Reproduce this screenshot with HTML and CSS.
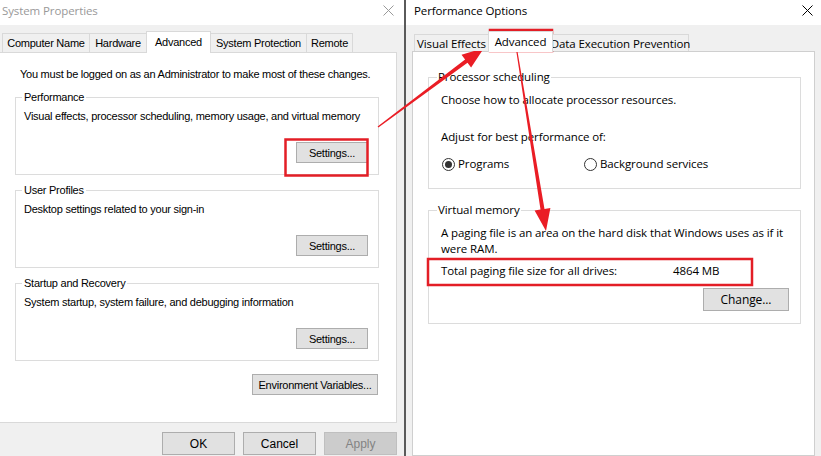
FILE: index.html
```html
<!DOCTYPE html>
<html lang="en">
<head>
<meta charset="utf-8">
<title>System Properties / Performance Options</title>
<link rel="stylesheet" href="styles.css">
</head>
<body>
<div class="desktop">
  <section class="win win-sys">
    <header class="titlebar">
      <span class="title title-inactive">System Properties</span>
      <svg class="close close-inactive" width="11" height="11" viewBox="0 0 11 11"><path d="M0.5 0.5L10.5 10.5M10.5 0.5L0.5 10.5"/></svg>
    </header>
    <nav class="tabs tabs-sys">
      <span class="tab w-cn">Computer Name</span>
      <span class="tab w-hw">Hardware</span>
      <span class="tab tab-active w-adv">Advanced</span>
      <span class="tab w-sp">System Protection</span>
      <span class="tab w-rm">Remote</span>
    </nav>
    <div class="panel panel-sys">
      <p class="note">You must be logged on as an Administrator to make most of these changes.</p>
      <fieldset class="group">
        <legend>Performance</legend>
        <p class="desc">Visual effects, processor scheduling, memory usage, and virtual memory</p>
        <div class="btnrow"><button class="btn btn-set">Settings...</button></div>
      </fieldset>
      <fieldset class="group">
        <legend>User Profiles</legend>
        <p class="desc">Desktop settings related to your sign-in</p>
        <div class="btnrow"><button class="btn btn-set">Settings...</button></div>
      </fieldset>
      <fieldset class="group">
        <legend>Startup and Recovery</legend>
        <p class="desc">System startup, system failure, and debugging information</p>
        <div class="btnrow"><button class="btn btn-set">Settings...</button></div>
      </fieldset>
      <div class="envrow"><button class="btn btn-env">Environment Variables...</button></div>
    </div>
    <footer class="footer">
      <button class="btn btn-dlg">OK</button>
      <button class="btn btn-dlg">Cancel</button>
      <button class="btn btn-dlg btn-disabled">Apply</button>
    </footer>
  </section>

  <section class="win win-perf">
    <header class="titlebar">
      <span class="title">Performance Options</span>
      <svg class="close" width="11" height="11" viewBox="0 0 11 11"><path d="M0.5 0.5L10.5 10.5M10.5 0.5L0.5 10.5"/></svg>
    </header>
    <nav class="tabs tabs-perf">
      <span class="tab w-ve">Visual Effects</span>
      <span class="tab tab-active w-adv2">Advanced</span>
      <span class="tab w-dep">Data Execution Prevention</span>
    </nav>
    <div class="panel panel-perf">
      <fieldset class="group group-perf">
        <legend>Processor scheduling</legend>
        <p class="line first">Choose how to allocate processor resources.</p>
        <p class="line adjust">Adjust for best performance of:</p>
        <div class="radios">
          <span class="radio"><span class="dot dot-on"></span>Programs</span>
          <span class="radio"><span class="dot"></span>Background services</span>
        </div>
      </fieldset>
      <fieldset class="group group-perf group-vm">
        <legend>Virtual memory</legend>
        <p class="line first nowrap">A paging file is an area on the hard disk that Windows uses as if it<br>were RAM.</p>
        <div class="total"><span>Total paging file size for all drives:</span><span>4864 MB</span></div>
        <div class="btnrow"><button class="btn btn-change">Change...</button></div>
      </fieldset>
    </div>
  </section>
</div>

<svg class="annot" width="821" height="456" viewBox="0 0 821 456">
  <rect x="285.5" y="139.5" width="82" height="36"/>
  <rect x="490" y="30" width="62" height="21"/>
  <rect x="428" y="259" width="324" height="26"/>
  <polygon class="arrow" points="377.6,126.5 465.1,59.6 461.5,54.8 484,48 471.1,67.6 467.5,62.8 378.4,127.5"/>
  <polygon class="arrow" points="516.4,52.1 540.5,209.6 534.6,210.6 546,231 550.4,208 544.5,209 517.6,51.9"/>
</svg>
</body>
</html>
```

FILE: styles.css
```css
* { box-sizing: border-box; }
html, body { margin: 0; padding: 0; }
body {
  width: 821px;
  height: 456px;
  overflow: hidden;
  position: relative;
  background: #f0f0f0;
  font-family: "Liberation Sans", Arial, sans-serif;
  color: #000;
}
p { margin: 0; }

.desktop { display: flex; height: 456px; }

.win { background: #f0f0f0; display: flex; flex-direction: column; }
.win-sys { width: 404px; flex: none; font-size: 11px; letter-spacing: -0.25px; }
.win-perf {
  flex: 1;
  border-left: 2px solid #5a5a5a;
  font-family: "Open Sans", "Noto Sans", sans-serif;
  font-size: 11.5px;
  letter-spacing: -0.1px;
}

/* title bars */
.titlebar {
  height: 25px;
  flex: none;
  background: #fff;
  display: flex;
  align-items: center;
  justify-content: space-between;
  font-family: "Open Sans", "Noto Sans", sans-serif;
  font-size: 11.5px;
  letter-spacing: -0.1px;
}
.win-sys .titlebar { padding: 0 10px 0 2px; }
.win-perf .titlebar { padding: 0 8px 0 8px; }
.title { line-height: 16px; margin-top: -4px; }
.title-inactive { color: #999; }
.close { stroke: #000; stroke-width: 1; fill: none; margin-top: -5px; }
.close-inactive { stroke: #999; }

/* tabs */
.tabs { display: flex; align-items: flex-end; position: relative; z-index: 1; flex: none; }
.tabs-sys { height: 27px; padding-left: 2px; }
.tabs-perf { height: 26px; padding-left: 8px; }
.tab {
  border: 1px solid #d9d9d9;
  border-bottom: none;
  background: #f0f0f0;
  display: flex;
  align-items: center;
  justify-content: center;
  margin-right: -1px;
  white-space: nowrap;
}
.tabs-sys .tab { height: 19px; }
.tabs-perf .tab { height: 17px; }
.tabs .tab-active { background: #fff; margin-bottom: -1px; position: relative; z-index: 2; }
.tabs-sys .tab-active { height: 22px; padding-bottom: 2px; }
.tabs-perf .tab-active { height: 21px; padding-bottom: 2px; }
.w-cn { width: 88px; }
.w-hw { width: 58px; }
.w-adv { width: 65px; }
.w-sp { width: 97px; }
.w-rm { width: 47px; }
.w-ve { width: 75px; }
.w-adv2 { width: 65px; }
.w-dep { width: 137px; }

/* panels */
.panel { background: #fff; border: 1px solid #d9d9d9; flex: none; }
.panel-sys {
  margin-left: -1px;
  width: 398px;
  height: 371px;
  padding: 14px 17px 0 15px;
}
.panel-perf {
  margin-left: 6px;
  width: 403px;
  flex: 1;
  border-color: #cfcfcf;
  padding: 17px 13px 0 15px;
}

.note { line-height: 15px; margin-left: 5px; margin-bottom: 8px; }

/* group boxes */
.group {
  margin: 0 0 8px 0;
  border: 1px solid #dcdcdc;
  padding: 4px 10px 11px 8px;
  min-width: 0;
}
.group legend { padding: 0 2px; margin-left: -2px; line-height: 15px; }
.desc { line-height: 15px; }
.btnrow { display: flex; justify-content: flex-end; margin-top: 18px; }

.btn {
  font: inherit;
  letter-spacing: inherit;
  color: #000;
  background: #e1e1e1;
  border: 1px solid #adadad;
  padding: 0;
  margin: 0;
}
.btn-set { width: 72px; height: 21px; }
.envrow { display: flex; justify-content: flex-end; margin-top: 13px; padding-right: 1px; }
.btn-env { width: 126px; height: 21px; }

.footer { display: flex; justify-content: flex-end; gap: 8px; padding: 9px 7px 0 0; }
.btn-dlg { width: 73px; height: 23px; font-size: 12px; letter-spacing: 0; }
.btn-disabled { background: #cccccc; border-color: #bfbfbf; color: #838383; }

/* performance options groups */
.group-perf { padding: 7px 11px 16px 12px; margin-bottom: 13px; }
.group-perf legend { line-height: 16px; margin-left: -4px; padding: 0 1px; }
.line { line-height: 16px; }
.adjust { margin-top: 21px; }
.nowrap { white-space: nowrap; }
.radios { display: grid; grid-template-columns: 142px auto; margin-top: 11px; line-height: 16px; }
.radio { display: flex; align-items: center; }
.dot {
  width: 13px;
  height: 13px;
  border: 1px solid #333;
  border-radius: 50%;
  margin: 0 3px 0 1px;
  display: flex;
  align-items: center;
  justify-content: center;
  background: #fff;
}
.dot-on::after { content: ""; width: 7px; height: 7px; border-radius: 50%; background: #333; }

.group-vm { padding-bottom: 12px; }
.total { display: grid; grid-template-columns: 232px auto; line-height: 16px; margin-top: 6px; }
.group-vm .btnrow { margin-top: 9px; }
.btn-change { width: 86px; height: 23px; font-size: 12px; }

/* annotations */
.annot { position: absolute; left: 0; top: 0; pointer-events: none; }
.annot rect { fill: none; stroke: #e31e26; stroke-width: 2.5; }
.annot .arrow { fill: #ea1d25; }
```
